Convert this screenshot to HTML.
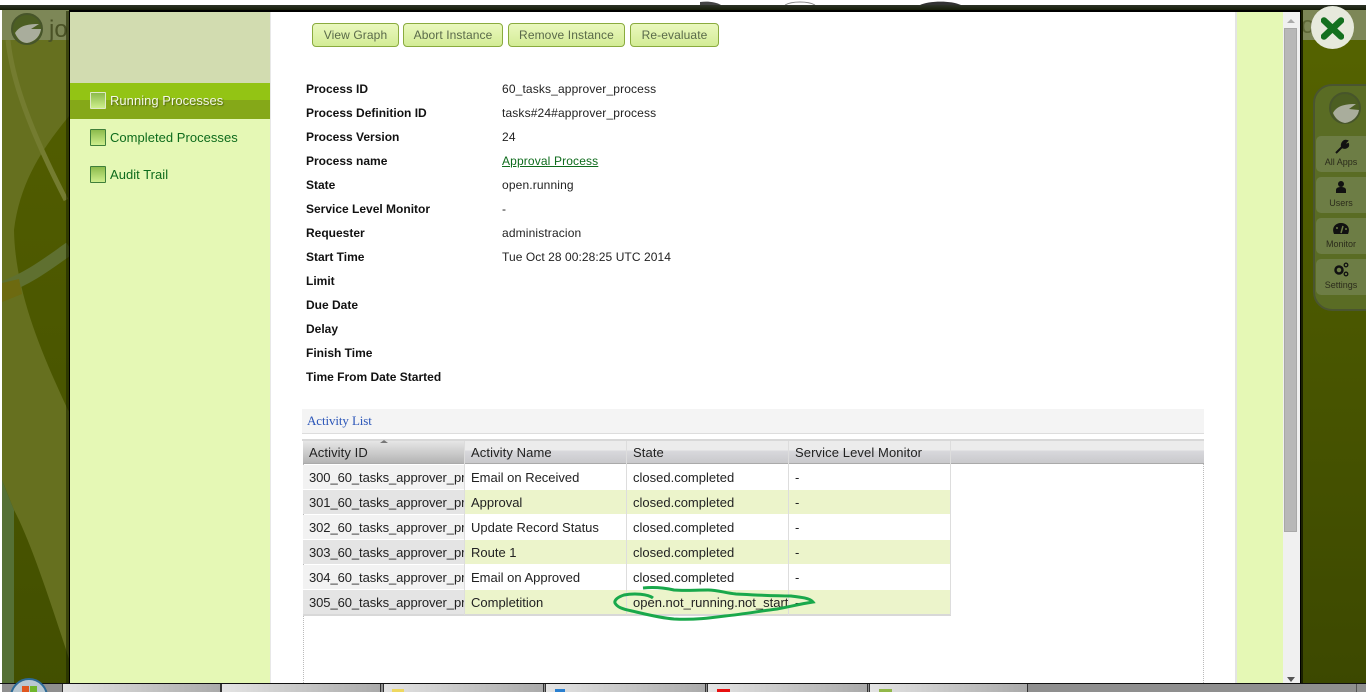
<!DOCTYPE html>
<html><head><meta charset="utf-8"><title>Process Instance</title>
<style>
html,body{margin:0;padding:0;width:1366px;height:692px;overflow:hidden;background:#fff;font-family:"Liberation Sans",sans-serif;font-size:12px;color:#111}
.a{position:absolute;white-space:nowrap}
.btn{position:absolute;top:23px;height:22px;line-height:22px;text-align:center;color:#5a6a4a;letter-spacing:.1px;border:1px solid #8aab3e;border-radius:4px;background:linear-gradient(#eaf8be,#d3ec96)}
.lb{position:absolute;left:306px;font-weight:bold;color:#111;line-height:14px;white-space:nowrap}
.vl{position:absolute;left:502px;color:#222;line-height:14px;letter-spacing:.14px;white-space:nowrap}
.nav{position:absolute;left:110px;font-size:13px;line-height:16px;letter-spacing:.03px;color:#0e6b1c;white-space:nowrap}
.chk{position:absolute;left:90px;width:14px;height:15px;border:1px solid #3f7f3a;background:linear-gradient(#8cbb4c,#cdee8c);border-radius:1px}
.th{position:absolute;top:441px;height:23px;line-height:23px;font-size:13px;letter-spacing:.1px;padding-left:6px;box-sizing:border-box;color:#222;background:linear-gradient(#ececec 0 43%,#d9d9dd 43%,#c9c9cc);border-bottom:1px solid #aaa;white-space:nowrap;overflow:hidden}
.td{position:absolute;height:24px;line-height:26px;font-size:13px;letter-spacing:0;padding-left:6px;box-sizing:border-box;color:#222;white-space:nowrap;overflow:hidden}
.id{letter-spacing:-.08px}
.tile{position:absolute;left:1316px;width:50px;height:36px;background:#6d7d45;border-radius:5px 0 0 5px;text-align:center;font-size:9px;color:#2b2b1b}
.tile span{position:absolute;left:0;width:50px;text-align:center;top:21px}
.tile svg{position:absolute;left:15px;top:2px}
.tb{position:absolute;top:684px;height:8px;background:linear-gradient(90deg,#e4e4e4,#aaa);border-left:1px solid #333;border-right:1px solid #333;box-sizing:border-box}
</style></head><body>

<svg class="a" style="left:0;top:0" width="70" height="692" viewBox="0 0 70 692">
<defs><linearGradient id="d" x1="0" y1="0" x2="0" y2="1"><stop offset="0" stop-color="#545f00"/><stop offset="1" stop-color="#424f00"/></linearGradient></defs>
<rect width="70" height="692" fill="url(#d)"/>
<path d="M2 40H70V115C45 145 20 180 14 230C15 290 40 350 68 410L70 412V662C50 600 30 540 14 510L2 480Z" fill="#66701f"/>
<path d="M8 40C12 80 30 130 66 200" stroke="#747c30" stroke-width="5" fill="none"/>
<path d="M2 288C30 278 50 262 70 248" stroke="#5f7030" stroke-width="13" fill="none"/>
<path d="M2 283L19 279 22 294 2 302Z" fill="#6d6a10"/>
<path d="M2 480L14 510V692H2Z" fill="#557035"/>
<rect x="0" y="10" width="70" height="30" fill="#7d8757"/>
<circle cx="27" cy="29" r="15" fill="#4c5e22" stroke="#47552a" stroke-width="2"/>
<path d="M15 33C20 25 29 24 39 24L31 29 41 29C40 37 34 42 27 43 21 43 17 38 15 33Z" fill="#a9ad9c"/>
<text x="49" y="37" font-family="Liberation Sans,sans-serif" font-size="24" fill="#4a5226">jo</text>
<rect x="0" y="0" width="2" height="692" fill="#fff"/>
<rect x="66" y="11" width="4" height="672" fill="#1c2400" opacity=".6"/>
</svg>

<svg class="a" style="left:1300px;top:0" width="66" height="692" viewBox="0 0 66 692">
<defs><linearGradient id="g" x1="0" y1="0" x2="0" y2="1"><stop offset="0" stop-color="#566400"/><stop offset="1" stop-color="#3c4800"/></linearGradient></defs>
<rect width="66" height="692" fill="url(#g)"/>
<rect y="10" width="66" height="30" fill="#7d8757"/>
<text x="1" y="33" font-family="Liberation Sans,sans-serif" font-size="24" fill="#5d6636">og</text>
<rect x="0" y="10" width="3" height="674" fill="#1a2000"/>
<rect x="14" y="85" width="70" height="225" rx="18" fill="#5a6c24" stroke="#4a5530" stroke-width="2"/>
<circle cx="45" cy="108" r="15" fill="#4c5e22" stroke="#47552a" stroke-width="2"/>
<path d="M33 113C37 105 47 104 56 104L49 109 59 110C58 117 52 122 45 123 39 122 35 118 33 113Z" fill="#a9ad9c"/>
</svg>

<div class="a" style="left:0;top:0;width:1366px;height:5px;background:#fff"></div>
<svg class="a" style="left:700px;top:0" width="300" height="6"><path d="M0 2C8 1 16 2 21 5H0Z" fill="#444"/><path d="M85 5C92 1 108 1 115 5" stroke="#888" fill="none"/><path d="M220 5C228 1 250 0 261 5Z" fill="#333"/></svg>
<div class="a" style="left:0;top:5px;width:1366px;height:5px;background:linear-gradient(#2d3327,#161c08)"></div>

<!-- modal -->
<div class="a" style="left:69px;top:10px;width:1232px;height:674px;background:#000"></div>
<div class="a" style="left:70px;top:12px;width:200px;height:671px;background:#e5f8b5"></div>
<div class="a" style="left:70px;top:12px;width:200px;height:71px;background:#d2dcb0"></div>
<div class="a" style="left:70px;top:83px;width:200px;height:17px;background:#93c414"></div>
<div class="a" style="left:70px;top:100px;width:200px;height:19px;background:#85a818"></div>
<div class="a" style="left:270px;top:12px;width:966px;height:671px;background:#fff"></div>
<div class="a" style="left:270px;top:12px;width:1px;height:671px;background:#e8e8e8"></div>
<div class="a" style="left:1235px;top:12px;width:2px;height:671px;background:#e4e4e4"></div>
<div class="a" style="left:1237px;top:12px;width:46px;height:671px;background:#e5f8b5"></div>
<div class="a" style="left:1283px;top:12px;width:17px;height:671px;background:#f0f0f0"></div>
<div class="a" style="left:1284px;top:28px;width:13px;height:504px;background:#b8b8b8;border:1px solid #a8a8a8;box-sizing:border-box"></div>
<svg class="a" style="left:1285px;top:18px" width="12" height="6"><path d="M2 5L6 1 10 5Z" fill="#aaa"/></svg>
<svg class="a" style="left:1285px;top:676px" width="12" height="7"><path d="M2 1H10L6 6Z" fill="#555"/></svg>

<!-- nav -->
<div class="chk" style="top:92px;border-color:#dfe9c8"></div>
<div class="nav" style="top:93px;color:#f4f8e6;text-shadow:1px 1px 1px #556b10">Running Processes</div>
<div class="chk" style="top:129px"></div>
<div class="nav" style="top:130px">Completed Processes</div>
<div class="chk" style="top:166px"></div>
<div class="nav" style="top:167px">Audit Trail</div>

<!-- buttons -->
<div class="btn" style="left:312px;width:85px">View Graph</div>
<div class="btn" style="left:403px;width:98px">Abort Instance</div>
<div class="btn" style="left:508px;width:115px">Remove Instance</div>
<div class="btn" style="left:630px;width:87px">Re-evaluate</div>

<!-- details -->
<div class="lb" style="top:82px">Process ID</div><div class="vl" style="top:82px">60_tasks_approver_process</div>
<div class="lb" style="top:106px">Process Definition ID</div><div class="vl" style="top:106px">tasks#24#approver_process</div>
<div class="lb" style="top:130px">Process Version</div><div class="vl" style="top:130px">24</div>
<div class="lb" style="top:154px">Process name</div><div class="vl" style="top:154px;color:#0e6b1c;text-decoration:underline">Approval Process</div>
<div class="lb" style="top:178px">State</div><div class="vl" style="top:178px">open.running</div>
<div class="lb" style="top:202px">Service Level Monitor</div><div class="vl" style="top:202px">-</div>
<div class="lb" style="top:226px">Requester</div><div class="vl" style="top:226px">administracion</div>
<div class="lb" style="top:250px">Start Time</div><div class="vl" style="top:250px;letter-spacing:.07px">Tue Oct 28 00:28:25 UTC 2014</div>
<div class="lb" style="top:274px">Limit</div>
<div class="lb" style="top:298px">Due Date</div>
<div class="lb" style="top:322px">Delay</div>
<div class="lb" style="top:346px">Finish Time</div>
<div class="lb" style="top:370px">Time From Date Started</div>

<!-- activity list -->
<div class="a" style="left:302px;top:409px;width:902px;height:25px;background:#f4f4f4;border-bottom:1px solid #ddd;box-sizing:border-box"></div>
<div class="a" style="left:307px;top:413px;font:13px/16px 'Liberation Serif',serif;letter-spacing:-.1px;color:#2a55b8">Activity List</div>
<div class="a" style="left:302px;top:439px;width:902px;height:2px;background:#d8d8d8"></div>
<div class="a" style="left:303px;top:441px;width:0;height:242px;border-left:1px dotted #bbb"></div>
<div class="a" style="left:1203px;top:441px;width:0;height:242px;border-left:1px dotted #bbb"></div>

<div class="th" style="left:303px;width:161px;background:linear-gradient(#e6e6e6,#b4b4b4)">Activity ID</div>
<div class="th" style="left:465px;width:161px">Activity Name</div>
<div class="th" style="left:627px;width:161px">State</div>
<div class="th" style="left:789px;width:161px">Service Level Monitor</div>
<div class="th" style="left:951px;width:253px"></div>
<svg class="a" style="left:379px;top:439px" width="10" height="5"><path d="M1 4L5 1 9 4" fill="#777"/></svg>

<div class="td id" style="left:303px;top:465px;width:161px;background:#f2f2f2">300_60_tasks_approver_process</div>
<div class="td" style="left:465px;top:465px;width:161px;background:#fff">Email on Received</div>
<div class="td" style="left:627px;top:465px;width:161px;background:#fff">closed.completed</div>
<div class="td" style="left:789px;top:465px;width:161px;background:#fff">-</div>

<div class="td id" style="left:303px;top:490px;width:161px;background:#e4e4e4">301_60_tasks_approver_process</div>
<div class="td" style="left:465px;top:490px;width:161px;background:#ecf4cb">Approval</div>
<div class="td" style="left:627px;top:490px;width:161px;background:#ecf4cb">closed.completed</div>
<div class="td" style="left:789px;top:490px;width:161px;background:#ecf4cb">-</div>

<div class="td id" style="left:303px;top:515px;width:161px;background:#f2f2f2">302_60_tasks_approver_process</div>
<div class="td" style="left:465px;top:515px;width:161px;background:#fff">Update Record Status</div>
<div class="td" style="left:627px;top:515px;width:161px;background:#fff">closed.completed</div>
<div class="td" style="left:789px;top:515px;width:161px;background:#fff">-</div>

<div class="td id" style="left:303px;top:540px;width:161px;background:#e4e4e4">303_60_tasks_approver_process</div>
<div class="td" style="left:465px;top:540px;width:161px;background:#ecf4cb">Route 1</div>
<div class="td" style="left:627px;top:540px;width:161px;background:#ecf4cb">closed.completed</div>
<div class="td" style="left:789px;top:540px;width:161px;background:#ecf4cb">-</div>

<div class="td id" style="left:303px;top:565px;width:161px;background:#f2f2f2">304_60_tasks_approver_process</div>
<div class="td" style="left:465px;top:565px;width:161px;background:#fff">Email on Approved</div>
<div class="td" style="left:627px;top:565px;width:161px;background:#fff">closed.completed</div>
<div class="td" style="left:789px;top:565px;width:161px;background:#fff">-</div>

<div class="td id" style="left:303px;top:590px;width:161px;background:#e4e4e4">305_60_tasks_approver_process</div>
<div class="td" style="left:465px;top:590px;width:161px;background:#ecf4cb">Completition</div>
<div class="td" style="left:627px;top:590px;width:161px;background:#ecf4cb">open.not_running.not_started</div>
<div class="td" style="left:789px;top:590px;width:161px;background:#ecf4cb">-</div>

<div class="a" style="left:303px;top:614px;width:648px;height:2px;background:#d8d8d8"></div>
<div class="a" style="left:464px;top:441px;width:1px;height:174px;background:#ddd"></div>
<div class="a" style="left:626px;top:441px;width:1px;height:174px;background:#ddd"></div>
<div class="a" style="left:788px;top:441px;width:1px;height:174px;background:#ddd"></div>
<div class="a" style="left:950px;top:441px;width:1px;height:174px;background:#ddd"></div>

<svg class="a" style="left:610px;top:585px" width="210" height="40" viewBox="0 0 210 40">
<path d="M43 13C38 9 24 8 14 10C8 12 4 15 5 18C7 22 12 24 22 26C35 29 50 33 64 34C85 35 100 33 115 31C135 29 150 26 167 24C178 22 190 19 203 17C200 13 190 12 181 11C162 11 145 10 126 9C115 8 108 5 98 5C85 5 75 6 64 5C55 3 43 2 33 3" fill="none" stroke="#19a84b" stroke-width="3"/>
</svg>

<!-- close -->
<div class="a" style="left:1311px;top:6px;width:43px;height:43px;border-radius:50%;background:#e6e9dc"></div>
<svg class="a" style="left:1321px;top:17px" width="23" height="23" viewBox="0 0 23 23"><path d="M3 3.500L20 19.500M20 3.500L3 19.500" stroke="#13701f" stroke-width="6.500" stroke-linecap="round"/></svg>

<!-- dock -->
<div class="tile" style="top:136px"><svg width="20" height="17" viewBox="0 0 20 17"><path d="M5 15L12 8M11 9C10 5 13 2 16 3L14 5 15 7 17 6C18 9 14 11 11 9Z" stroke="#111" stroke-width="2" fill="#111"/></svg><span>All Apps</span></div>
<div class="tile" style="top:177px"><svg width="20" height="17" viewBox="0 0 20 17"><circle cx="10" cy="5" r="3" fill="#111"/><path d="M5 14V11C5 9 7 8 10 8S15 9 15 11V14Z" fill="#111"/></svg><span>Users</span></div>
<div class="tile" style="top:218px"><svg width="20" height="17" viewBox="0 0 20 17"><path d="M3 14C0 7 5 3 10 3S20 7 17 14Z" fill="#111"/><path d="M10 13L12 6" stroke="#6d7d45" stroke-width="1.500"/><circle cx="6" cy="8" r="1" fill="#6d7d45"/><circle cx="15" cy="9" r="1" fill="#6d7d45"/></svg><span>Monitor</span></div>
<div class="tile" style="top:259px"><svg width="20" height="17" viewBox="0 0 20 17"><circle cx="8" cy="9" r="3.500" fill="none" stroke="#111" stroke-width="2.500"/><circle cx="15" cy="4" r="1.800" fill="none" stroke="#111" stroke-width="1.300"/><circle cx="15" cy="13" r="1.800" fill="none" stroke="#111" stroke-width="1.300"/></svg><span>Settings</span></div>

<!-- taskbar -->
<div class="a" style="left:0;top:683px;width:1366px;height:1px;background:#111"></div>
<div class="a" style="left:0;top:684px;width:1366px;height:8px;background:#8f8f8f"></div>
<div class="a" style="left:0;top:684px;width:2px;height:8px;background:#fff"></div>
<svg class="a" style="left:10px;top:678px" width="38" height="14" viewBox="0 0 38 14"><circle cx="19" cy="19" r="18" fill="#b9c8d2" stroke="#2c6a96" stroke-width="2"/><rect x="12" y="8" width="7" height="6" fill="#e0561f"/><rect x="20" y="8" width="7" height="6" fill="#6fb52c"/></svg>
<div class="tb" style="left:62px;width:159px"></div>
<div class="tb" style="left:221px;width:160px"></div>
<div class="tb" style="left:383px;width:161px"></div>
<div class="tb" style="left:545px;width:161px"></div>
<div class="tb" style="left:707px;width:161px"></div>
<div class="tb" style="left:869px;width:159px"></div>
<div class="a" style="left:392px;top:689px;width:12px;height:3px;background:#eed860"></div>
<div class="a" style="left:555px;top:689px;width:10px;height:3px;background:#2a80d0"></div>
<div class="a" style="left:717px;top:689px;width:13px;height:3px;background:#e81010"></div>
<div class="a" style="left:879px;top:689px;width:13px;height:3px;background:#92b84a"></div>
<div class="a" style="left:1356px;top:684px;width:1px;height:8px;background:#555"></div>
</body></html>
